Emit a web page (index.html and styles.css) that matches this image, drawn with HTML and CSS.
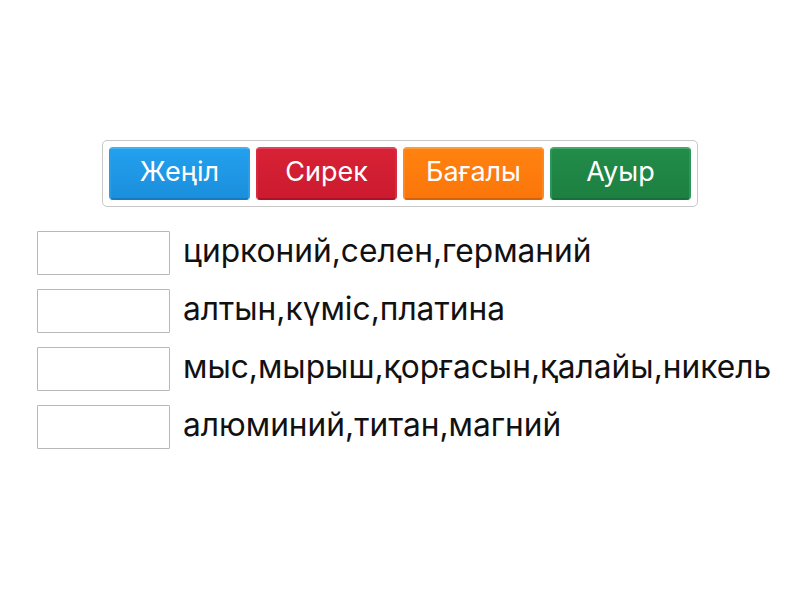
FILE: index.html
```html
<!DOCTYPE html>
<html lang="kk">
<head>
  <meta charset="UTF-8">
  <meta name="viewport" content="width=device-width, initial-scale=1.0">
  <title>Металдар</title>
  <link rel="stylesheet" href="styles.css">
</head>
<body>
  <div class="bank">
    <div class="tile tile-blue">Жеңіл</div>
    <div class="tile tile-red">Сирек</div>
    <div class="tile tile-orange">Бағалы</div>
    <div class="tile tile-green">Ауыр</div>
  </div>

  <div class="rows">
    <div class="row"><div class="slot"></div><span class="label">цирконий,селен,германий</span></div>
    <div class="row"><div class="slot"></div><span class="label">алтын,күміс,платина</span></div>
    <div class="row"><div class="slot"></div><span class="label">мыс,мырыш,қорғасын,қалайы,никель</span></div>
    <div class="row"><div class="slot"></div><span class="label">алюминий,титан,магний</span></div>
  </div>
</body>
</html>
```

FILE: styles.css
```css
body { margin: 0; background: #fff; font-family: Inter, "Noto Sans", sans-serif; color: #111; }
.bank { display: flex; gap: 6px; width: max-content; margin: 140px auto 0; padding: 6px; border: 1px solid #c8c8c8; border-radius: 5px; }
.tile { width: 141px; height: 53px; box-sizing: border-box; display: flex; align-items: center; justify-content: center; padding-bottom: 4px; color: #fff; font-size: 27px; border-radius: 4px; border: 2px solid; }
.tile-blue { background: linear-gradient(#23a0ee, #1b8fdc); border-color: #41b2f5 #2a9de6 #157bc2; }
.tile-red { background: linear-gradient(#d82236, #cc1a2e); border-color: #e2435a #d52a40 #ad1224; }
.tile-orange { background: linear-gradient(#ff8210, #fb760a); border-color: #ff9a3d #ff8720 #d8620a; }
.tile-green { background: linear-gradient(#228c4a, #1c8040); border-color: #46a866 #2e955a #16703a; }
.rows { display: flex; flex-direction: column; gap: 14px; margin: 24px 0 0 37px; }
.row { display: flex; align-items: center; gap: 13px; }
.slot { width: 133px; height: 44px; box-sizing: border-box; border: 1px solid #b8b8b8; border-radius: 1px; background: #fff; }
.label { font-size: 31.7px; line-height: 1; white-space: nowrap; padding-bottom: 4px; }
```
